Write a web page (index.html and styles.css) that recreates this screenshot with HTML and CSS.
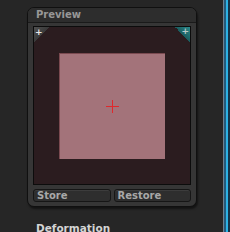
FILE: index.html
```html
<!DOCTYPE html>
<html>
<head>
<meta charset="utf-8">
<link rel="stylesheet" href="styles.css">
</head>
<body>
<div class="page">
  <div class="panel">
    <div class="header">Preview</div>
    <div class="body">
      <div class="preview">
        <div class="corner corner-left"><span>+</span></div>
        <div class="corner corner-right"><span>+</span></div>
        <div class="square">
          <div class="cross-h"></div>
          <div class="cross-v"></div>
        </div>
      </div>
      <div class="buttons">
        <div class="btn">Store</div>
        <div class="btn">Restore</div>
      </div>
    </div>
  </div>
  <div class="section">Deformation</div>
</div>
<div class="edge"></div>
</body>
</html>
```
FILE: styles.css
```css
html, body {
  margin: 0;
  padding: 0;
  width: 230px;
  height: 232px;
  overflow: hidden;
  background: #262626;
  font-family: "DejaVu Sans", Verdana, sans-serif;
}
body {
  display: flex;
}
.page {
  width: 223px;
  padding: 7px 0 0 27px;
  box-sizing: border-box;
}
.edge {
  width: 7px;
  height: 232px;
  background: linear-gradient(to right, #6f8191 0, #6f8191 1px, #245a7c 1px, #245a7c 3px, #2db3e6 3px, #2db3e6 5px, #173348 5px);
}
.panel {
  width: 170px;
  box-sizing: border-box;
  border: 1px solid #101010;
  border-radius: 7px;
  background: #363636;
  box-shadow: 1px 2px 2px rgba(0,0,0,0.5);
}
.header {
  height: 14px;
  background: #2d2d2d;
  border-radius: 6px 6px 0 0;
  border-bottom: 1px solid #1a1a1a;
  color: #979797;
  font-size: 10px;
  font-weight: bold;
  line-height: 13px;
  padding-left: 8px;
}
.body {
  padding: 3px 5px 4px 5px;
}
.preview {
  position: relative;
  height: 159px;
  box-sizing: border-box;
  border: 1px solid #0c0c0c;
  background: #2b1c1f;
  display: flex;
  align-items: center;
  justify-content: center;
}
.square {
  position: relative;
  width: 106px;
  height: 106px;
  background: #a3737a;
  border-top: 1px solid #7a4a50;
  border-left: 1px solid #7a4a50;
  box-sizing: border-box;
  margin-top: 1px;
}
.cross-h {
  position: absolute;
  left: 46px;
  top: 52px;
  width: 13px;
  height: 1px;
  background: #e0282c;
}
.cross-v {
  position: absolute;
  left: 52px;
  top: 46px;
  width: 1px;
  height: 13px;
  background: #e0282c;
}
.corner {
  position: absolute;
  top: 0;
  width: 15px;
  height: 15px;
}
.corner span {
  position: absolute;
  font-size: 9px;
  font-weight: bold;
  line-height: 9px;
}
.corner-left {
  left: 0;
  background: linear-gradient(135deg, #505050 0, #3a3a3a 50%, transparent 50%);
}
.corner-left span {
  left: 1px;
  top: 1px;
  color: #e8e8e8;
}
.corner-right {
  right: 0;
  background: linear-gradient(225deg, #2a8a8c 0, #1b5c5e 50%, transparent 50%);
}
.corner-right span {
  right: 1px;
  top: 0;
  color: #b8c8c8;
}
.buttons {
  display: flex;
  gap: 3px;
  margin-top: 4px;
}
.btn {
  flex: 1;
  height: 13px;
  box-sizing: border-box;
  border: 1px solid #161616;
  border-radius: 3px;
  background: #2e2e2e;
  box-shadow: inset 0 1px 0 #3c3c3c;
  color: #a8a8a8;
  font-size: 10px;
  font-weight: bold;
  line-height: 11px;
  padding-left: 3px;
}
.section {
  margin-top: 15px;
  padding-left: 9px;
  color: #d4d4d4;
  font-size: 10.5px;
  font-weight: bold;
}
```
